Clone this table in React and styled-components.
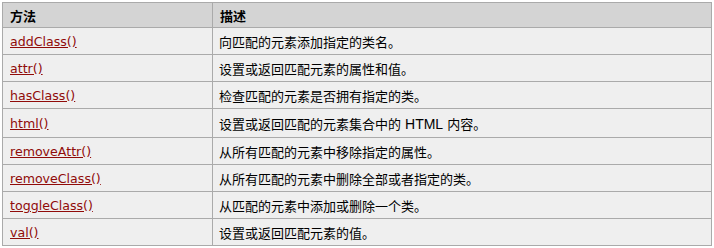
import styled, { createGlobalStyle } from 'styled-components';

const GlobalStyle = createGlobalStyle`
  body {
    margin: 2px;
    background: #ffffff;
    font-family: "DejaVu Sans", "Noto Sans CJK SC", sans-serif;
  }
`;

const Table = styled.table`
  width: 710px;
  border-collapse: collapse;
  border: 1px solid #aaaaaa;
  table-layout: fixed;
  font-size: 12.6px;
  color: #000000;
`;

const HeadCell = styled.th`
  background-color: #d4d4d4;
  border: 1px solid #aaaaaa;
  height: 24px;
  padding: 0 7px;
  text-align: left;
  font-weight: bold;
  font-family: "Noto Sans CJK SC", sans-serif;
  font-size: 13px;
  width: ${(p) => p.width || 'auto'};
`;

const Cell = styled.td`
  background-color: #efefef;
  border: 1px solid #aaaaaa;
  height: ${(p) => (p.tall ? '28px' : '26px')};
  padding: 0 7px;
  vertical-align: middle;
  box-sizing: content-box;
`;

const Desc = styled(Cell)`
  font-family: "Noto Sans CJK SC", sans-serif;
  font-size: 13px;
  padding-left: 6px;
`;

const MethodLink = styled.a`
  color: #900b09;
  text-decoration: underline;
  cursor: pointer;
`;

const Latin = styled.span`
  font-family: "Liberation Sans", sans-serif;
  font-size: 14px;
  margin: 0 4px;
`;

const rows = [
  { name: 'addClass()', desc: '向匹配的元素添加指定的类名。' },
  { name: 'attr()', desc: '设置或返回匹配元素的属性和值。' },
  { name: 'hasClass()', desc: '检查匹配的元素是否拥有指定的类。' },
  {
    name: 'html()',
    tall: true,
    desc: (
      <>
        设置或返回匹配的元素集合中的<Latin>HTML</Latin>内容。
      </>
    ),
  },
  { name: 'removeAttr()', desc: '从所有匹配的元素中移除指定的属性。' },
  { name: 'removeClass()', desc: '从所有匹配的元素中删除全部或者指定的类。' },
  { name: 'toggleClass()', desc: '从匹配的元素中添加或删除一个类。' },
  { name: 'val()', desc: '设置或返回匹配元素的值。' },
];

const App = () => {
  return (
    <>
      <GlobalStyle />
      <Table>
        <thead>
          <tr>
            <HeadCell width="195px">方法</HeadCell>
            <HeadCell>描述</HeadCell>
          </tr>
        </thead>
        <tbody>
          {rows.map((r) => (
            <tr key={r.name}>
              <Cell tall={r.tall}>
                <MethodLink>{r.name}</MethodLink>
              </Cell>
              <Desc tall={r.tall}>{r.desc}</Desc>
            </tr>
          ))}
        </tbody>
      </Table>
    </>
  );
};

export default App;
